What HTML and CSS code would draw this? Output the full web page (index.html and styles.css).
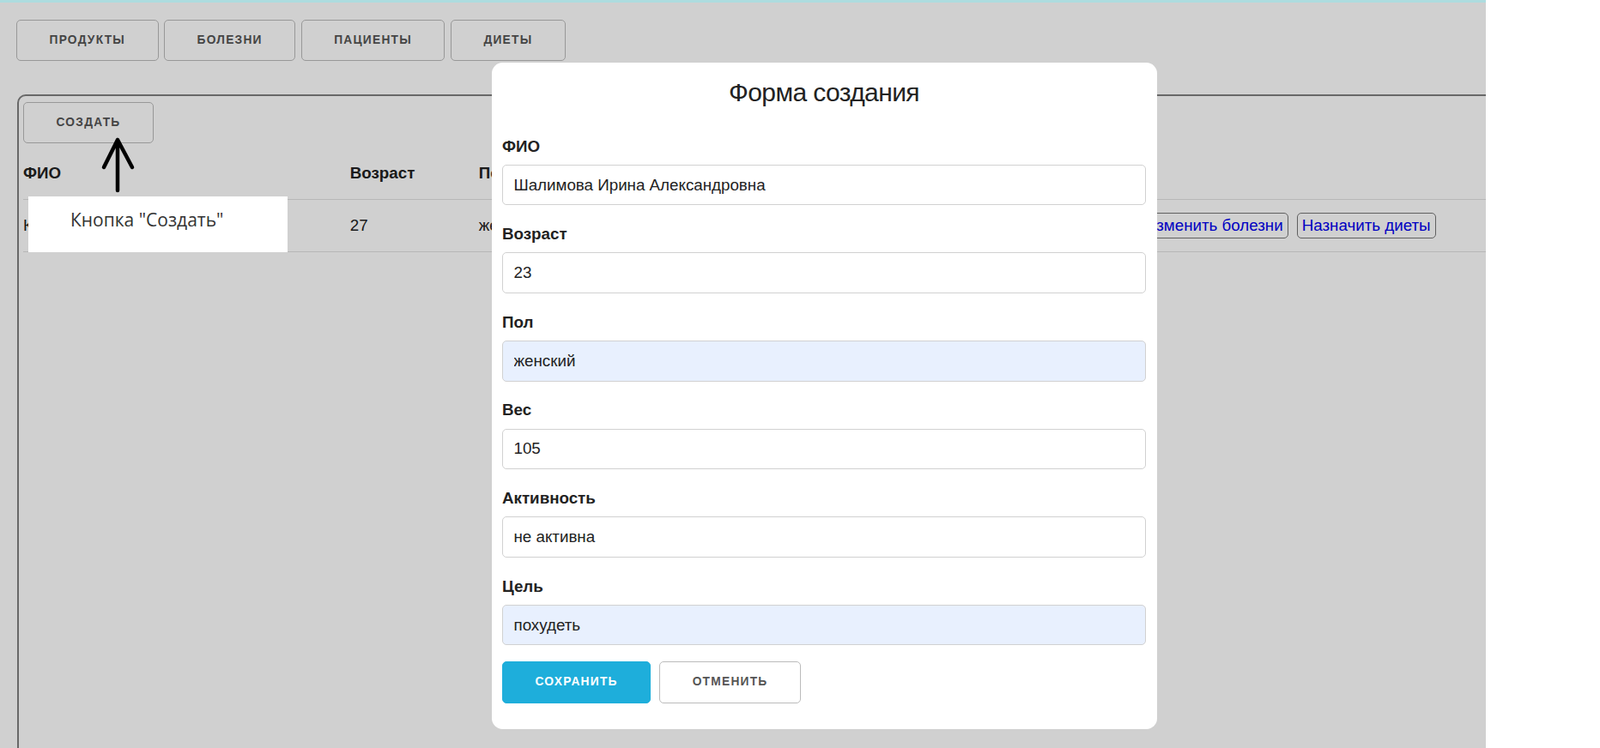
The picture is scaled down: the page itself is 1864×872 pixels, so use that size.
FILE: index.html
```html
<!DOCTYPE html>
<html lang="ru">
<head>
<meta charset="utf-8">
<title>Пациенты</title>
<link rel="stylesheet" href="styles.css">
</head>
<body>
<div class="shot">
  <div class="topbar"></div>
  <div class="viewport">
    <div class="page">
      <nav class="nav">
        <button class="btn">Продукты</button>
        <button class="btn">Болезни</button>
        <button class="btn">Пациенты</button>
        <button class="btn">Диеты</button>
      </nav>
      <section class="panel">
        <button class="btn create">Создать</button>
        <table class="table">
          <thead>
            <tr>
              <th class="c-name">ФИО</th>
              <th class="c-age">Возраст</th>
              <th class="c-mid">Пол</th>
              <th class="c-mid">Вес</th>
              <th class="c-mid">Активность</th>
              <th class="c-mid">Цель</th>
              <th class="c-act"></th>
            </tr>
          </thead>
          <tbody>
            <tr>
              <td>Кузнецова Анна Петровна</td>
              <td>27</td>
              <td>женский</td>
              <td>68</td>
              <td>активна</td>
              <td>поддержание</td>
              <td>
                <div class="actions">
                  <button class="link-btn">Изменить болезни</button>
                  <button class="link-btn">Назначить диеты</button>
                </div>
              </td>
            </tr>
          </tbody>
        </table>
      </section>
    </div>

    <div class="overlay"></div>

    <form class="modal">
      <h4 class="modal-title">Форма создания</h4>
      <label class="label">ФИО</label>
      <input class="field" type="text" value="Шалимова Ирина Александровна">
      <label class="label">Возраст</label>
      <input class="field" type="text" value="23">
      <label class="label">Пол</label>
      <input class="field autofill" type="text" value="женский">
      <label class="label">Вес</label>
      <input class="field" type="text" value="105">
      <label class="label">Активность</label>
      <input class="field" type="text" value="не активна">
      <label class="label">Цель</label>
      <input class="field autofill" type="text" value="похудеть">
      <div class="modal-actions">
        <button type="button" class="btn primary">Сохранить</button>
        <button type="button" class="btn cancel">Отменить</button>
      </div>
    </form>

    <div class="note">Кнопка "Создать"</div>
    <svg class="arrow" width="55" height="70" viewBox="0 0 55 70">
      <path d="M27 5 L27 64 M11 37 L27 5 L44 37" fill="none" stroke="#000" stroke-width="4.5" stroke-linecap="round" stroke-linejoin="round"/>
    </svg>
  </div>
</div>
</body>
</html>
```

FILE: styles.css
```css
html, body {
  margin: 0;
  padding: 0;
  background: #ffffff;
}

body {
  font-family: "Liberation Sans", Arial, sans-serif;
  font-size: 18.75px;
  line-height: 30px;
  color: #222;
}

.shot {
  width: 1731px;
  height: 872px;
  display: flex;
  flex-direction: column;
  overflow: hidden;
}

.topbar {
  height: 3px;
  flex: 0 0 3px;
  background: #addcdf;
}

.viewport {
  position: relative;
  flex: 1;
  overflow: hidden;
}

.page {
  width: 1920px;
  box-sizing: border-box;
  padding: 20px 20px 0 19px;
  background: #fff;
  min-height: 100%;
}

.nav {
  display: flex;
  gap: 6.5px;
}

.btn {
  box-sizing: border-box;
  display: inline-block;
  height: 47.5px;
  padding: 0 37.5px;
  margin: 0;
  font-family: "Liberation Sans", Arial, sans-serif;
  font-size: 13.75px;
  font-weight: 700;
  line-height: 45.5px;
  letter-spacing: 1.25px;
  text-transform: uppercase;
  color: #555;
  background: transparent;
  border: 1px solid #bbb;
  border-radius: 5px;
  white-space: nowrap;
}

.panel {
  margin: 39.5px 0 0 1px;
  border: 2px solid #808080;
  border-radius: 10px;
  padding: 7px 5px 0;
  height: 900px;
}

.create {
  display: block;
  margin-bottom: 5.5px;
}

.table {
  width: 100%;
  border-collapse: collapse;
  table-layout: fixed;
}

.table th,
.table td {
  box-sizing: border-box;
  text-align: left;
  padding: 15px 18.75px;
  border-bottom: 1px solid #e1e1e1;
  white-space: nowrap;
  overflow: hidden;
  vertical-align: middle;
}

.table th {
  font-weight: 700;
  color: #222;
}

.table th:first-child,
.table td:first-child {
  padding-left: 0;
}

.c-name { width: 362px; }
.c-age { width: 150px; }
.c-mid { width: 192.5px; }

.actions {
  display: flex;
  gap: 10px;
  height: 30px;
  align-items: center;
}

.link-btn {
  box-sizing: border-box;
  height: 30px;
  padding: 0 5px;
  margin: 0;
  font-family: "Liberation Sans", Arial, sans-serif;
  font-size: 18.75px;
  line-height: 26px;
  color: #0000ee;
  background: transparent;
  border: 1px solid #767676;
  border-radius: 5px;
}

.overlay {
  position: absolute;
  inset: 0;
  background: rgba(0, 0, 0, 0.184);
}

.modal {
  position: absolute;
  left: 573px;
  top: 70px;
  width: 775px;
  box-sizing: border-box;
  padding: 12.5px 13px 30px 12px;
  background: #fff;
  border-radius: 12.5px;
  margin: 0;
}

.modal-title {
  margin: 0 0 26px;
  text-align: center;
  font-size: 30px;
  font-weight: 400;
  line-height: 44px;
  letter-spacing: -0.6px;
  color: #222;
}

.label {
  display: block;
  font-weight: 700;
  line-height: 30px;
  margin-bottom: 6.25px;
  color: #222;
}

.field {
  display: block;
  box-sizing: border-box;
  width: 100%;
  height: 47.5px;
  margin: 0 0 18.9px;
  padding: 0 12.5px;
  font-family: "Liberation Sans", Arial, sans-serif;
  font-size: 18.75px;
  color: #222;
  background: #fff;
  border: 1px solid #d1d1d1;
  border-radius: 5px;
  outline: none;
}

.field.autofill {
  background: #e8f0fe;
}

.modal-actions {
  display: flex;
  gap: 10px;
}

.modal-actions .btn {
  height: 48.5px;
  line-height: 46.5px;
}

.primary {
  background: #1eaedb;
  border-color: #1eaedb;
  color: #fff;
}

.cancel {
  background: #fff;
}

.note {
  position: absolute;
  left: 33px;
  top: 226px;
  width: 302px;
  height: 65px;
  box-sizing: border-box;
  padding-left: 49px;
  background: #fff;
  font-family: "Open Sans", sans-serif;
  font-size: 21px;
  line-height: 54px;
  color: #333;
}

.arrow {
  position: absolute;
  left: 110px;
  top: 155px;
}
```
